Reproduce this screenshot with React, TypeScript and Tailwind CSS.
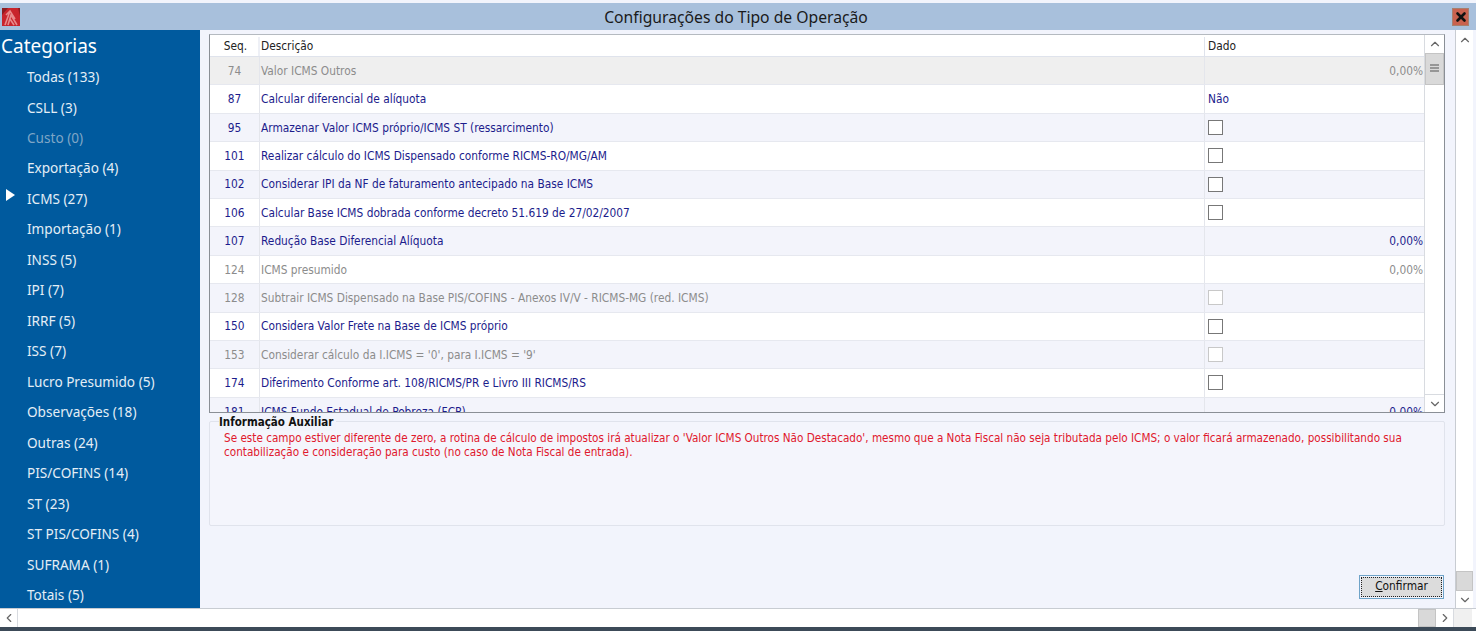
import React from "react";
import { ChevronUp, ChevronDown, ChevronLeft, ChevronRight, X } from "lucide-react";

const cats: [string, boolean?, boolean?][] = [
  ["Todas (133)"], ["CSLL (3)"], ["Custo (0)", true], ["Exportação (4)"], ["ICMS (27)", false, true],
  ["Importação (1)"], ["INSS (5)"], ["IPI (7)"], ["IRRF (5)"], ["ISS (7)"], ["Lucro Presumido (5)"],
  ["Observações (18)"], ["Outras (24)"], ["PIS/COFINS (14)"], ["ST (23)"], ["ST PIS/COFINS (4)"],
  ["SUFRAMA (1)"], ["Totais (5)"],
];

type R = { seq: string; d: string; v?: string; c?: boolean; g?: boolean; selected?: boolean; left?: boolean };
const rows: R[] = [
  { seq: "74", d: "Valor ICMS Outros", v: "0,00%", g: true, selected: true },
  { seq: "87", d: "Calcular diferencial de alíquota", v: "Não", left: true },
  { seq: "95", d: "Armazenar Valor ICMS próprio/ICMS ST (ressarcimento)", c: true },
  { seq: "101", d: "Realizar cálculo do ICMS Dispensado conforme RICMS-RO/MG/AM", c: true },
  { seq: "102", d: "Considerar IPI da NF de faturamento antecipado na Base ICMS", c: true },
  { seq: "106", d: "Calcular Base ICMS dobrada conforme decreto 51.619 de 27/02/2007", c: true },
  { seq: "107", d: "Redução Base Diferencial Alíquota", v: "0,00%" },
  { seq: "124", d: "ICMS presumido", v: "0,00%", g: true },
  { seq: "128", d: "Subtrair ICMS Dispensado na Base PIS/COFINS - Anexos IV/V - RICMS-MG (red. ICMS)", c: true, g: true },
  { seq: "150", d: "Considera Valor Frete na Base de ICMS próprio", c: true },
  { seq: "153", d: "Considerar cálculo da I.ICMS = '0', para I.ICMS = '9'", c: true, g: true },
  { seq: "174", d: "Diferimento Conforme art. 108/RICMS/PR e Livro III RICMS/RS", c: true },
  { seq: "181", d: "ICMS Fundo Estadual de Pobreza (FCP)", v: "0,00%" },
];

const font = "[font-family:'DejaVu_Sans_Condensed','DejaVu_Sans',sans-serif]";

function Btn({ children, cls = "" }: { children: React.ReactNode; cls?: string }) {
  return <div className={`flex items-center justify-center text-[#666] bg-white ${cls}`}>{children}</div>;
}

export default function App() {
  return (
    <div className="w-[1476px] h-[631px] overflow-hidden flex flex-col bg-[#f2f4fc] pt-[3px] text-[12px] [font-family:'Noto_Sans','DejaVu_Sans',sans-serif] border-b-[4px] border-[#3c4a58]">
      <div className="h-[27px] shrink-0 bg-[#a8c0dc] flex items-center relative">
        <svg width="18" height="18" viewBox="0 0 18 18" className="ml-[2px] mt-[1px]">
          <rect width="18" height="18" fill="#c8242c" />
          <path d="M0 0 H6 L0 7 Z" fill="#8c1c22" />
          <path d="M16 0 H18 V8 Z" fill="#8c1c22" />
          <path d="M3 17 L8 3 M6 17 L9 7 L15 17 M8 11 L12 17 M4 7 L8 3 L13 11" stroke="#e88a8c" strokeWidth="1.6" fill="none" />
        </svg>
        <div className="flex-1 text-center text-[15.7px] text-[#1a1a1a] leading-none pt-[2px]">Configurações do Tipo de Operação</div>
        <div className="w-[17px] h-[18px] mr-[7px] mt-[1px] bg-[#c9624f] border border-[#a8806f] flex items-center justify-center">
          <X size={14} strokeWidth={4.5} className="text-[#111]" />
        </div>
      </div>
      <div className="flex-1 flex min-h-0">
        <div className="w-[200px] shrink-0 bg-[#005a9e] text-[#e4eef6] relative flex flex-col overflow-hidden">
          <div className="text-[19px] leading-[26px] pt-[3px] pl-[1px] text-white h-[32px]">Categorias</div>
          <div className="flex flex-col pt-[3px]">
            {cats.map(([n, dis, active]) => (
              <div key={n} className={`h-[30.47px] shrink-0 pl-[27px] flex items-center text-[13.6px] relative ${dis ? "text-[#7fa6c6]" : ""}`}>
                {active && <span className="absolute left-[6px] top-[5px] w-0 h-0 border-y-[6px] border-y-transparent border-l-[9px] border-l-white" />}
                {n}
              </div>
            ))}
          </div>
        </div>

        <div className="flex-1 min-w-0 flex flex-col pl-[9px] pr-[3px]">
          <div className="flex-1 flex min-h-0">
            <div className="w-[1236px] shrink-0 flex flex-col pt-[4px]">
              <div className="h-[379px] shrink-0 border border-[#8a8f96] border-t-[#b5bac0] bg-white flex overflow-hidden">
                <div className={`flex-1 min-w-0 flex flex-col overflow-hidden text-[11.8px] ${font}`}>
                  <div className="h-[22px] shrink-0 flex items-center bg-white border-b border-[#dfe3ec] text-[#222] pt-[2px]">
                    <div className="w-[50px] text-center pl-[3px] border-r-2 border-[#eef0f6] h-full flex items-center justify-center">Seq.</div>
                    <div className="flex-1 pl-[1px] h-full flex items-center">Descrição</div>
                    <div className="w-[220px] pl-[3px] border-l border-[#dfe3ec] h-full flex items-center">Dado</div>
                  </div>
                  {rows.map((r, i) => (
                    <div
                      key={r.seq}
                      className={`h-[28.4px] shrink-0 flex items-center border-b border-[#e6e8ef] ${r.selected ? "bg-[#efefef]" : i % 2 ? "bg-white" : "bg-[#f3f4fb]"} ${r.g ? "text-[#8c8c8c]" : "text-[#1c1c8c]"}`}
                    >
                      <div className="w-[50px] text-center h-full pt-[2px] flex items-center justify-center border-r border-[#e4e6ec]">{r.seq}</div>
                      <div className="flex-1 pl-[1px] pt-[2px] whitespace-nowrap">{r.d}</div>
                      <div className={`w-[220px] h-full border-l border-[#e4e6ec] flex items-center pl-[3px] ${r.c ? "" : "pt-[2px]"} ${r.v && !r.left ? "justify-end pr-[1px]" : ""}`}>
                        {r.v}
                        {r.c && <span className={`w-[15px] h-[15px] border bg-white ${r.g ? "border-[#c8c8c8]" : "border-[#777]"}`} />}
                      </div>
                    </div>
                  ))}
                </div>
                <div className="w-[20px] shrink-0 flex flex-col border-l border-[#d8dbe0] bg-white">
                  <Btn cls="h-[18px]"><ChevronUp size={14} /></Btn>
                  <div className="h-[32px] bg-[#d9d9d9] border border-[#c4c4c4] flex items-center justify-center">
                    <svg width="9" height="8" viewBox="0 0 9 8" className="-mt-[2px]">
                      <path d="M0 1H9M0 4H9M0 7H9" stroke="#555" strokeWidth="1.2" />
                    </svg>
                  </div>
                  <div className="flex-1" />
                  <Btn cls="h-[18px] border-t border-[#d8dbe0]"><ChevronDown size={14} /></Btn>
                </div>
              </div>
              <div className="relative mt-[8px] h-[105px] shrink-0 border border-[#e0e3ec] rounded-[2px] bg-[#f4f5fc]">
                <div className={`absolute -top-[8px] left-[9px] bg-[#f2f4fc] pr-[3px] font-bold text-[11.5px] text-[#111] ${font}`}>Informação Auxiliar</div>
                <p className={`pl-[14px] pr-[10px] pt-[9px] text-[11.63px] leading-[14px] text-[#e0182d] ${font}`}>
                  Se este campo estiver diferente de zero, a rotina de cálculo de impostos irá atualizar o 'Valor ICMS Outros Não Destacado', mesmo que a Nota Fiscal não seja tributada pelo ICMS; o valor ficará armazenado, possibilitando sua contabilização e consideração para custo (no caso de Nota Fiscal de entrada).
                </p>
              </div>
              <div className="flex-1 flex items-end justify-end pb-[9px] pr-[1px]">
                <div className="w-[85px] h-[24px] border border-[#6fa3c8] p-[1px]">
                  <div className={`w-full h-full bg-[#dcdcdc] border border-dotted border-[#222] flex items-center justify-center text-[11.8px] text-[#111] ${font}`}>
                    <span><span className="underline">C</span>onfirmar</span>
                  </div>
                </div>
              </div>
            </div>
            <div className="flex-1" />
            <div className="w-[18px] shrink-0 flex flex-col border-l border-[#c8ccd2] bg-white">
              <Btn cls="h-[19px]"><ChevronUp size={14} /></Btn>
              <div className="flex-1" />
              <div className="h-[20px] bg-[#d9d9d9] border border-[#c4c4c4]" />
              <Btn cls="h-[17px]"><ChevronDown size={14} /></Btn>
            </div>
          </div>
        </div>
      </div>
      <div className="h-[19px] shrink-0 flex border-t border-[#c8ccd2] bg-white pr-[4px]">
        <Btn cls="w-[18px] border-r border-[#d8dbe0]"><ChevronLeft size={14} /></Btn>
        <div className="flex-1" />
        <div className="w-[18px] bg-[#d9d9d9] border border-[#c4c4c4]" />
        <Btn cls="w-[18px] border-r border-[#d8dbe0]"><ChevronRight size={14} /></Btn>
        <div className="w-[18px] bg-[#f0f0f0]" />
      </div>
    </div>
  );
}
